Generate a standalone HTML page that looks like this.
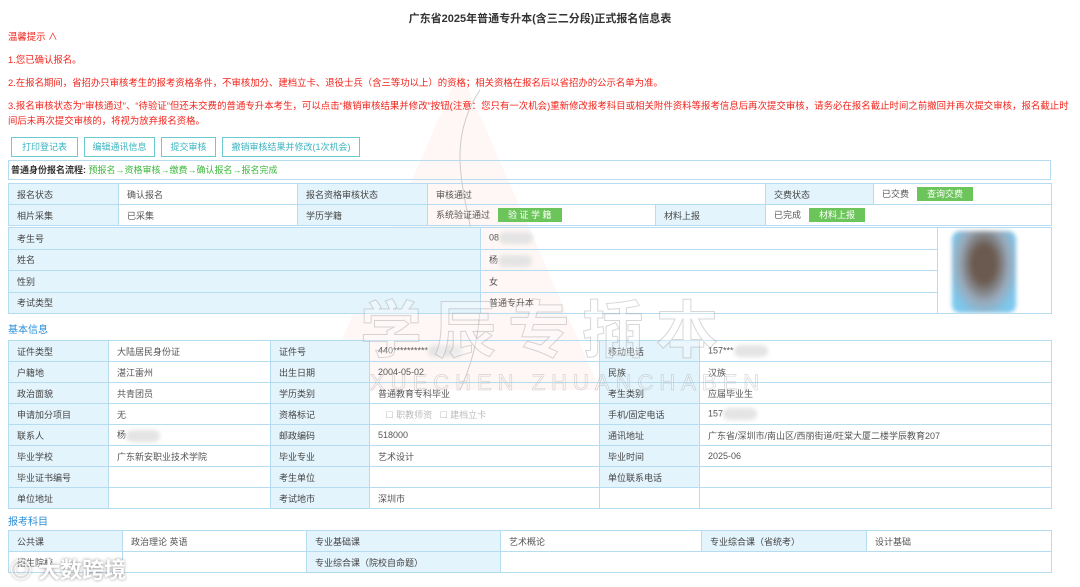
<!DOCTYPE html>
<html><head><meta charset="utf-8"><style>
*{margin:0;padding:0;box-sizing:border-box}
body{width:1080px;height:587px;background:#fff;font-family:"Liberation Sans","Noto Sans CJK SC",sans-serif;font-size:9px;color:#555;position:relative;overflow:hidden}
.a{position:absolute;white-space:nowrap}
.r{color:#f2231b;font-size:9.4px}
table{position:absolute;border-collapse:collapse;table-layout:fixed}
td{border:1px solid #b5dcf0;height:21px;padding:0 0 0 8px;white-space:nowrap;overflow:hidden;color:#555}
td.l{background:#e4f4fc;color:#444}
.btn{position:absolute;top:137px;height:20px;border:1px solid #6cc9cf;color:#3bb4c0;text-align:center;line-height:18px;font-size:9px}
.g{display:inline-block;background:#6cc55a;color:#fff;padding:0 10px;height:14px;line-height:14px;margin-left:8px}
.blur{display:inline-block;width:34px;height:12px;background:#e4e4e4;border-radius:6px;vertical-align:middle;filter:blur(2px)}
.sec{position:absolute;left:8px;color:#2a8fd8;font-size:10px}
</style></head><body>
<svg class="a" style="left:300px;top:60px" width="420" height="420"><polygon points="160,10 20,330 300,330" fill="#fdf0eb" opacity=".5"/><path d="M180 30 C120 120 220 200 160 330" stroke="#ccc" fill="none"/></svg>
<div class="a" style="left:0;width:1080px;top:10px;text-align:center;font-size:11px;font-weight:bold;color:#333">广东省2025年普通专升本(含三二分段)正式报名信息表</div>
<div class="a r" style="left:8px;top:29px">温馨提示 ∧</div>
<div class="a r" style="left:8px;top:52px">1.您已确认报名。</div>
<div class="a r" style="left:8px;top:75px">2.在报名期间，省招办只审核考生的报考资格条件，不审核加分、建档立卡、退役士兵（含三等功以上）的资格；相关资格在报名后以省招办的公示名单为准。</div>
<div class="a r" style="left:8px;top:98px;letter-spacing:.05px">3.报名审核状态为“审核通过”、“待验证”但还未交费的普通专升本考生，可以点击“撤销审核结果并修改”按钮(注意：您只有一次机会)重新修改报考科目或相关附件资料等报考信息后再次提交审核，请务必在报名截止时间之前撤回并再次提交审核，报名截止时</div>
<div class="a r" style="left:8px;top:113px">间后未再次提交审核的，将视为放弃报名资格。</div>
<div class="btn" style="left:11px;width:67px">打印登记表</div>
<div class="btn" style="left:84px;width:71px">编辑通讯信息</div>
<div class="btn" style="left:161px;width:55px">提交审核</div>
<div class="btn" style="left:222px;width:138px">撤销审核结果并修改(1次机会)</div>
<div class="a" style="left:8px;top:160px;width:1043px;height:20px;border:1px solid #b5dcf0;line-height:18px;padding-left:2px"><b style="color:#333">普通身份报名流程:</b> <span style="color:#3cb83c">预报名→资格审核→缴费→确认报名→报名完成</span></div>
<table style="left:8px;top:183px;width:1043px">
<col style="width:110px"><col style="width:179px"><col style="width:130px"><col style="width:228px"><col style="width:110px"><col style="width:108px"><col style="width:178px">
<tr><td class="l">报名状态</td><td>确认报名</td><td class="l">报名资格审核状态</td><td colspan="2">审核通过</td><td class="l">交费状态</td><td>已交费<span class="g">查询交费</span></td></tr>
<tr><td class="l">相片采集</td><td>已采集</td><td class="l">学历学籍</td><td>系统验证通过<span class="g">验 证 学 籍</span></td><td class="l">材料上报</td><td colspan="2">已完成<span class="g">材料上报</span></td></tr>
</table>
<table style="left:8px;top:227px;width:1043px">
<col style="width:472px"><col style="width:457px"><col style="width:114px">
<tr><td class="l">考生号</td><td>08<span class="blur"></span></td><td rowspan="4" style="padding:0;background:#fff"><div style="margin:3px 0 0 14px;width:64px;height:82px;border-radius:8px;background:radial-gradient(ellipse at 50% 40%,#6b5a4f 25%,#9ab 55%,#7cc8ee 80%);filter:blur(2px)"></div></td></tr>
<tr><td class="l">姓名</td><td>杨<span class="blur"></span></td></tr>
<tr><td class="l">性别</td><td>女</td></tr>
<tr><td class="l">考试类型</td><td>普通专升本</td></tr>
</table>
<div class="sec" style="top:321px">基本信息</div>
<table style="left:8px;top:340px;width:1043px">
<col style="width:100px"><col style="width:162px"><col style="width:99px"><col style="width:230px"><col style="width:100px"><col style="width:352px">
<tr><td class="l">证件类型</td><td>大陆居民身份证</td><td class="l">证件号</td><td>440**********<span class="blur"></span></td><td class="l">移动电话</td><td>157***<span class="blur"></span></td></tr>
<tr><td class="l">户籍地</td><td>湛江雷州</td><td class="l">出生日期</td><td>2004-05-02</td><td class="l">民族</td><td>汉族</td></tr>
<tr><td class="l">政治面貌</td><td>共青团员</td><td class="l">学历类别</td><td>普通教育专科毕业</td><td class="l">考生类别</td><td>应届毕业生</td></tr>
<tr><td class="l">申请加分项目</td><td>无</td><td class="l">资格标记</td><td style="color:#bbb">&nbsp;&nbsp;&nbsp;☐ 职教师资 &nbsp;&nbsp;☐ 建档立卡</td><td class="l">手机/固定电话</td><td>157<span class="blur"></span></td></tr>
<tr><td class="l">联系人</td><td>杨<span class="blur"></span></td><td class="l">邮政编码</td><td>518000</td><td class="l">通讯地址</td><td>广东省/深圳市/南山区/西丽街道/旺棠大厦二楼学辰教育207</td></tr>
<tr><td class="l">毕业学校</td><td>广东新安职业技术学院</td><td class="l">毕业专业</td><td>艺术设计</td><td class="l">毕业时间</td><td>2025-06</td></tr>
<tr><td class="l">毕业证书编号</td><td></td><td class="l">考生单位</td><td></td><td class="l">单位联系电话</td><td></td></tr>
<tr><td class="l">单位地址</td><td></td><td class="l">考试地市</td><td>深圳市</td><td></td><td></td></tr>
</table>
<div class="sec" style="top:513px">报考科目</div>
<table style="left:8px;top:530px;width:1043px">
<col style="width:114px"><col style="width:184px"><col style="width:194px"><col style="width:201px"><col style="width:165px"><col style="width:185px">
<tr><td class="l">公共课</td><td>政治理论 英语</td><td class="l">专业基础课</td><td>艺术概论</td><td class="l">专业综合课（省统考）</td><td>设计基础</td></tr>
<tr><td>招生院校</td><td></td><td class="l">专业综合课（院校自命题）</td><td colspan="3"></td></tr>
</table>
<div class="a" style="left:360px;top:280px;font-size:62px;color:rgba(255,255,255,.3);-webkit-text-stroke:1px rgba(140,140,140,.35);letter-spacing:12px;font-weight:bold">学辰专插本</div>
<div class="a" style="left:370px;top:370px;font-size:22px;color:rgba(255,255,255,.2);-webkit-text-stroke:.7px rgba(140,140,140,.35);letter-spacing:6px">XUECHEN ZHUANCHABEN</div>
<div class="a" style="left:10px;top:553px;font-size:22px;color:#fff;font-weight:bold;text-shadow:0 0 3px #888">◎ 大数跨境</div>
</body></html>
